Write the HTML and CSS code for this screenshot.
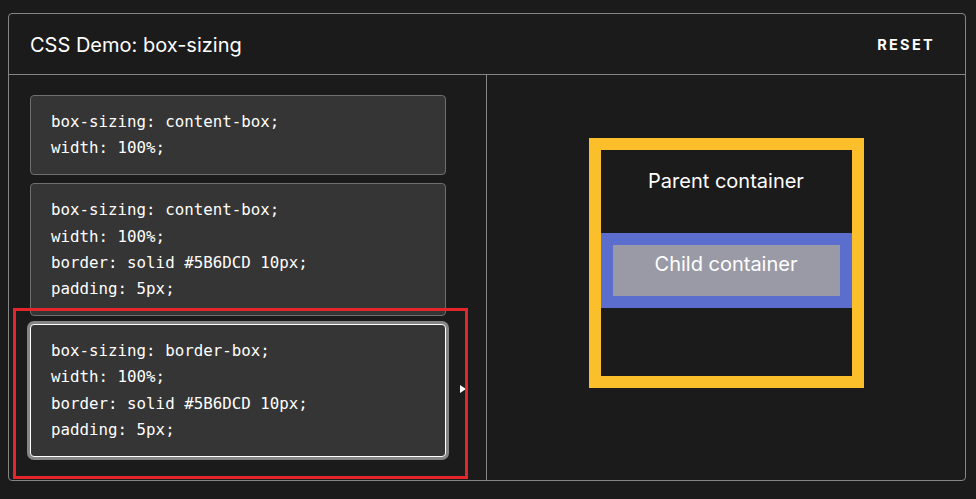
FILE: index.html
```html
<!DOCTYPE html>
<html>
<head>
<meta charset="utf-8">
<link rel="stylesheet" href="styles.css">
</head>
<body>
<div class="frame">
  <header class="head">
    <h1 class="title">CSS Demo: box-sizing</h1>
    <button class="reset">RESET</button>
  </header>
  <div class="body">
    <div class="choices">
      <div class="code">box-sizing: content-box;<br>width: 100%;</div>
      <div class="code">box-sizing: content-box;<br>width: 100%;<br>border: solid #5B6DCD 10px;<br>padding: 5px;</div>
      <div class="code selected">box-sizing: border-box;<br>width: 100%;<br>border: solid #5B6DCD 10px;<br>padding: 5px;</div>
      <div class="arrow"></div>
    </div>
    <div class="output">
      <div class="parent">
        <p class="parent-label">Parent container</p>
        <div class="child">Child container</div>
      </div>
    </div>
  </div>
  <div class="highlight"></div>
</div>
</body>
</html>
```
FILE: styles.css
```css
html, body {
  margin: 0;
  padding: 0;
  background: #1b1b1b;
}
body {
  font-family: Inter, "Noto Sans", sans-serif;
  color: #ffffff;
}
.frame {
  position: relative;
  margin: 13px 0 0 8px;
  width: 958px;
  height: 468px;
  box-sizing: border-box;
  border: 1px solid #858585;
  border-radius: 4px;
  display: flex;
  flex-direction: column;
}
.head {
  height: 60px;
  border-bottom: 1px solid #858585;
  display: flex;
  align-items: center;
  justify-content: space-between;
  padding: 0 32px 0 21px;
}
.title {
  margin: 0;
  font-weight: 400;
  font-size: 20px;
  padding-top: 1px;
}
.reset {
  background: none;
  border: none;
  color: #ffffff;
  font-family: Inter, sans-serif;
  font-weight: 700;
  font-size: 14.5px;
  letter-spacing: 2.3px;
  padding: 0;
  margin-right: -2px;
}
.body {
  flex: 1;
  display: flex;
}
.choices {
  position: relative;
  width: 478px;
  box-sizing: border-box;
  border-right: 1px solid #858585;
  padding: 20px 40px 0 21px;
  display: flex;
  flex-direction: column;
  gap: 8px;
}
.code {
  background: #353535;
  border: 1px solid #6e6e6e;
  border-radius: 4px;
  padding: 13px 20px;
  font-family: "DejaVu Sans Mono", monospace;
  font-size: 15.8px;
  line-height: 26.2px;
  color: #ffffff;
}
.code.selected {
  border-color: #ffffff;
  box-shadow: 0 0 0 3px #858585;
}
.arrow {
  position: absolute;
  left: 451px;
  top: 310px;
  width: 0;
  height: 0;
  border-top: 4px solid transparent;
  border-bottom: 4px solid transparent;
  border-left: 6px solid #ffffff;
}
.output {
  flex: 1;
  display: flex;
  justify-content: center;
  align-items: flex-start;
  padding-top: 63px;
}
.parent {
  width: 275px;
  height: 250px;
  box-sizing: border-box;
  border: 12px solid #fbbf2b;
  display: flex;
  flex-direction: column;
  align-items: center;
}
.parent-label {
  margin: 19px 0 0;
  font-size: 20px;
  line-height: 24px;
}
.child {
  margin-top: 40px;
  width: 100%;
  box-sizing: border-box;
  border: 12px solid #5b6dcd;
  background: #999aa5;
  padding: 7px 5px 0;
  height: 75px;
  text-align: center;
  font-size: 20px;
  line-height: 24px;
}
.highlight {
  position: absolute;
  left: 4px;
  top: 294px;
  width: 455px;
  height: 171px;
  box-sizing: border-box;
  border: 3px solid #e3262b;
}
```
